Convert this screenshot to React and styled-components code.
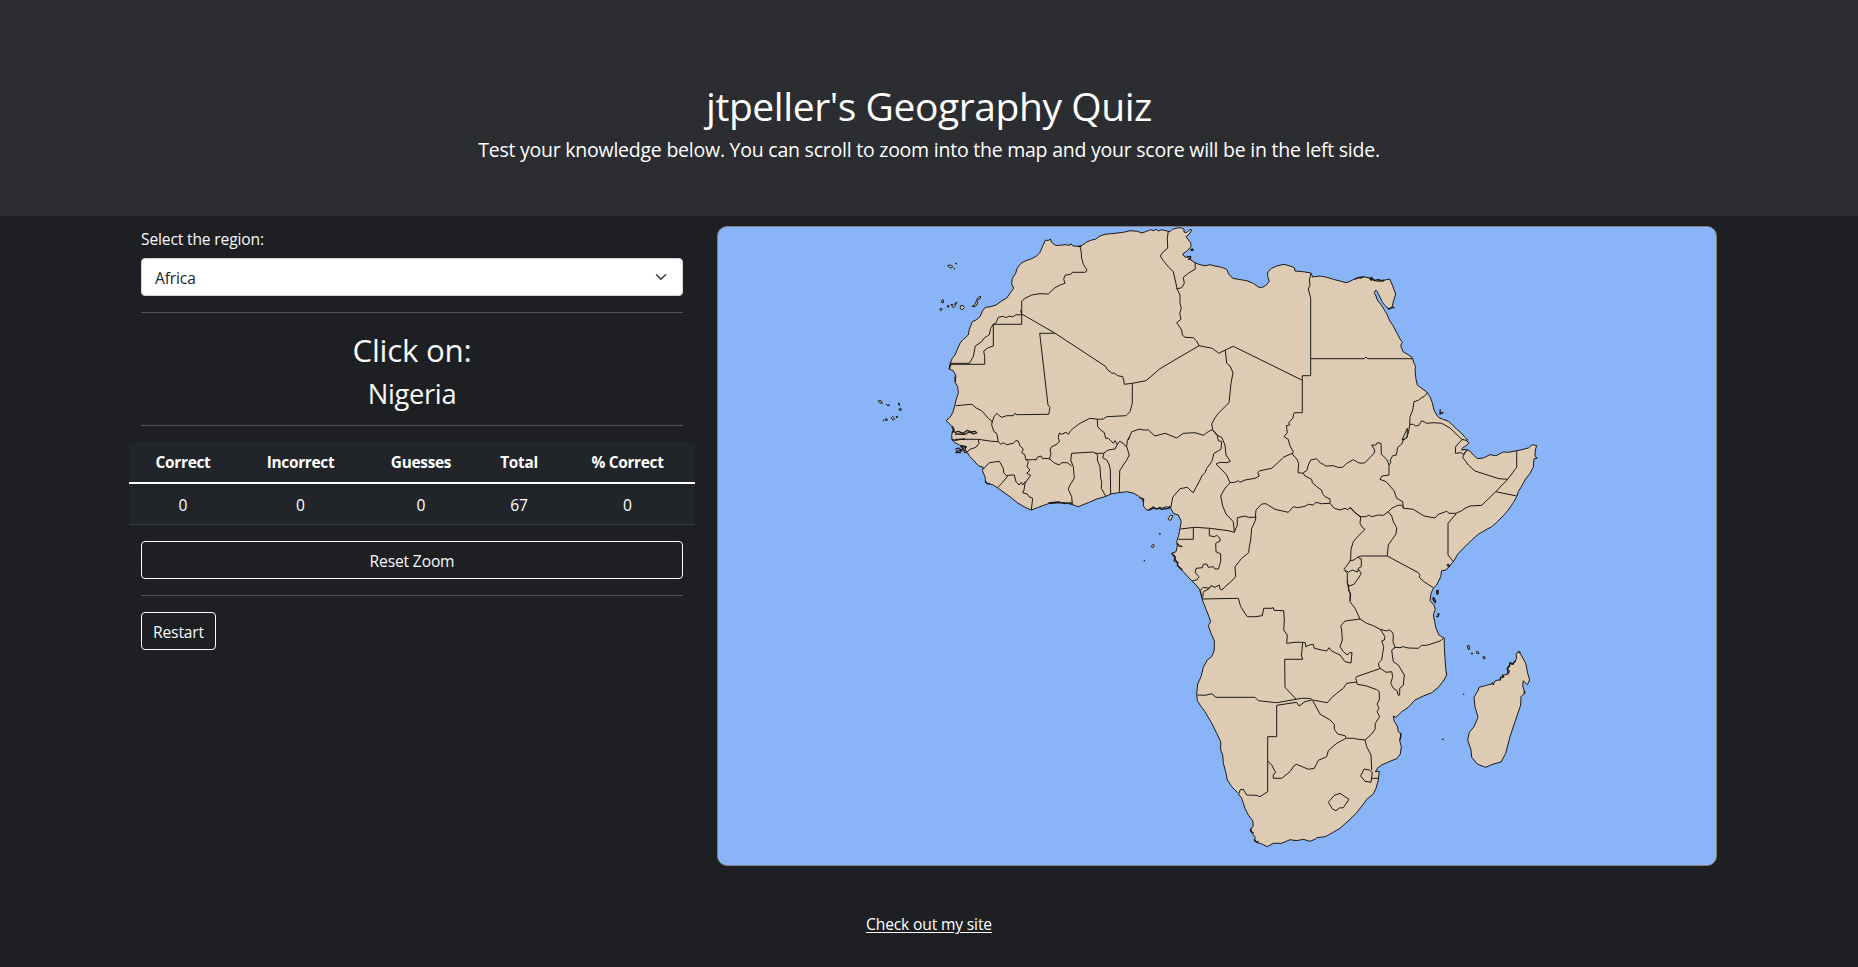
import React from "react";
import styled, { createGlobalStyle } from "styled-components";

const GlobalStyle = createGlobalStyle`
  *, *::before, *::after { box-sizing: border-box; }
  body {
    margin: 0;
    background: #1e1f23;
    color: #f8f9fa;
    font-family: "Segoe UI", "Open Sans", "Noto Sans", sans-serif;
    font-size: 15.6px;
    line-height: 24px;
    letter-spacing: -0.15px;
  }
`;

const Page = styled.div`
  height: 967px;
  overflow: hidden;
  background: #1e1f23;
`;

const Header = styled.header`
  height: 216px;
  padding-top: 82px;
  background: #2b2d31;
  color: #fff;
  text-align: center;
`;

const Title = styled.h1`
  margin: 0 0 5px;
  font-size: 39px;
  font-weight: 400;
  line-height: 48px;
  letter-spacing: -0.43px;
`;

const Lead = styled.p`
  margin: 0;
  font-size: 19.5px;
  font-weight: 400;
  line-height: 30px;
  letter-spacing: -0.235px;
`;

const Main = styled.main`
  width: 1600px;
  margin: 0 auto;
  display: flex;
  align-items: flex-start;
`;

const Sidebar = styled.section`
  width: 566px;
  padding: 11px 12px 0;
  display: flex;
  flex-direction: column;
`;

const Label = styled.label`
  height: 24px;
  margin-bottom: 7px;
`;

const Select = styled.div`
  height: 38px;
  padding: 0 13px;
  display: flex;
  align-items: center;
  justify-content: space-between;
  background: #fff;
  color: #212529;
  border: 1px solid #ced4da;
  border-radius: 4px;
`;

const Selected = styled.span`
  padding-top: 2px;
`;

const Rule = styled.hr`
  width: 100%;
  height: 1px;
  margin: 16px 0;
  border: 0;
  background: #515255;
`;

const Prompt = styled.h2`
  margin: 0 0 8px;
  padding-top: 2px;
  font-size: 31.3px;
  font-weight: 400;
  line-height: 38.4px;
  letter-spacing: -0.26px;
  text-align: center;
`;

const Target = styled.h3`
  margin: 0 0 -2px;
  font-size: 27.3px;
  font-weight: 400;
  line-height: 33.6px;
  letter-spacing: -0.34px;
  text-align: center;
`;

const ScoreTable = styled.table`
  width: 566px;
  margin: 0 -12px 16px;
  table-layout: fixed;
  border-collapse: separate;
  border-spacing: 0;
  background: #212529;
  color: #fff;
  text-align: center;
`;

const Col = styled.col`
  width: ${(p) => p.$w}px;
`;

const HeadCell = styled.th`
  height: 40px;
  padding: 9px 0 7px;
  font-weight: 700;
  font-size: 15.4px;
  line-height: 24px;
  letter-spacing: -0.3px;
`;

const Cell = styled.td`
  height: 43px;
  padding: 9px 0 7px;
  border-top: 2px solid #fff;
  border-bottom: 1px solid #373b3e;
  line-height: 24px;
`;

const Button = styled.button`
  align-self: ${(p) => (p.$block ? "stretch" : "flex-start")};
  width: ${(p) => (p.$block ? "auto" : "75px")};
  height: 38px;
  padding: 2px 0 0;
  border: 1px solid #f8f9fa;
  border-radius: 4px;
  background: transparent;
  color: #f8f9fa;
  font: inherit;
  letter-spacing: inherit;
`;

const MapFrame = styled.section`
  width: 1000px;
  height: 640px;
  margin: 10px 0 0 22px;
  overflow: hidden;
  background: #8ab4f8;
  border: 1px solid #808080;
  border-radius: 10px;
`;

const MapSvg = styled.svg`
  display: block;
  width: 998px;
  height: 638px;
`;

const Land = styled.path`
  fill: #ddcbb3;
  stroke: #1c1a18;
  stroke-width: 1;
  stroke-linejoin: round;
`;

const Border = styled.path`
  fill: none;
  stroke: #1c1a18;
  stroke-width: ${(p) => p.$w || 1};
  stroke-linejoin: round;
`;

const Footer = styled.footer`
  margin-top: 46px;
  text-align: center;
`;

const SiteLink = styled.a`
  color: #fff;
  text-decoration: underline;
  text-underline-offset: 2px;
`;

/* Origins of the map sheets; points are stored in thirds of a pixel. */
const SHEETS = {
  A: [860, 220], B: [1080, 220], C: [1300, 220], D: [930, 400],
  E: [1150, 400], F: [1350, 400], G: [1180, 580], H: [1340, 580],
};

const project = (sheet, points) =>
  points.trim().split(/\s+/).map((pair) => {
    const [x, y] = pair.split(",").map(Number);
    return `${(SHEETS[sheet][0] + x / 3).toFixed(1)} ${(SHEETS[sheet][1] + y / 3).toFixed(1)}`;
  });

const line = (parts, close) =>
  "M" + parts.flatMap(([s, p]) => project(s, p)).join("L") + (close ? "Z" : "");

const COAST = [
  ["A", "267,447 270,432 277,415 285,405 292,388 300,370 308,360 325,345 328,328 337,305 348,300 360,290 368,272 376,262 392,260 408,255 425,243 440,234 450,220 461,205 455,192 457,175 467,160 471,145 483,130 497,122 515,116 530,108 540,97 548,78 556,61 566,61 571,57 574,66 586,76 600,76 615,74 630,76 632,71 640,78 655,79 668,75 680,66 695,60 706,58 720,48"],
  ["B", "75,43 105,40 130,37 150,32 172,34 186,39 200,34 212,29 222,32 228,27 235,33 245,29 262,33 270,35 277,28 295,23 305,24 312,28 312,36 320,38 330,28 335,30 328,42 318,50 324,58 332,68 333,80 322,92 308,102 315,112 330,110 332,120 345,128 360,134 375,137 390,134 405,138 425,142 440,148 446,162 458,175 475,178 500,182 520,190 535,201 545,203 558,196 568,184 563,170 563,156 575,145 590,138 612,133 630,138 643,143 645,153 670,155 693,159 697,168"],
  ["C", "37,171 60,168 80,172 100,178 120,183 138,188 150,184 165,176 180,171 195,171 210,174 222,182 240,184 255,180 269,177 277,195 287,222 280,245 276,262 270,268 258,260 248,248 240,232 232,215 227,210 223,218 228,228 232,240 242,253 252,268 262,285 268,300 280,318 290,338 303,362 308,367 303,372 303,380 310,396 325,404 337,413 342,430 347,440 345,450 348,478 352,495 365,505 380,516 390,530 397,548 402,570 410,585 418,594 430,598 445,604 455,612 470,628 480,635 495,652 503,660"],
  ["F", "348,121 357,128 350,136 338,143 335,150 350,148 362,155 370,165 383,176 400,174 420,164 438,167 460,156 475,157 500,152 515,149 535,144 547,134 560,137 556,150 555,168 562,174 552,176 550,202 540,220 525,240 513,262 505,275 500,290 490,308 475,330 460,347 440,367 425,380 405,391 385,403 365,420 345,440 325,460 310,485 295,502 288,510 275,512 272,530 260,555 250,565 243,580 240,602 252,615 256,628 250,645 254,665"],
  ["H", "288,145 297,165 313,175 313,200 315,235 317,265 320,285 310,303 295,322 275,338 250,348 225,360 205,382 185,395 168,412 160,408 163,425 172,438 175,455 182,462 182,472 179,482 184,500 181,522 170,536 145,546 125,555 112,565 106,575 118,574 115,600 108,625 100,642 80,658 68,675 50,698 30,718 0,745"],
  ["G", "460,757 435,770 410,773 405,778 390,784 370,778 350,782 330,779 305,790 280,790 262,800 248,793 232,788 223,783 226,772 216,760 210,750 220,738 218,722 205,705 195,685 185,655 172,637 155,620 142,600 137,575 130,550 128,525 122,510 122,485 110,460 95,430 75,395 60,375 52,362 50,340 53,312 63,290 70,262 82,240 95,230 103,210 103,182 93,160 85,137 92,125 85,105 75,80 67,60"],
  ["E", "157,598 150,570 138,555 120,537 100,515 85,500 78,480 65,460 78,455 82,438 80,425 87,402 90,385 94,365 85,345 70,340 62,325 50,320 30,326 10,325 0,330"],
  ["D", "650,330 640,318 641,303 628,290 612,280 590,275 545,281 525,290 500,297 475,308 445,320 428,314 405,308 380,309 355,311 330,320 304,330 285,322 262,308 240,290 225,280 205,265 190,255 167,249 165,230 157,212 160,202 145,197 130,180 120,170 112,158 103,158 100,145 110,140 88,135 75,128 66,120 65,105 70,90 65,80 58,70 48,62 60,52 68,38 74,18 78,0"],
  ["A", "295,520 293,500 284,485 288,468 280,452 267,447"],
];

const MADAGASCAR = [["H", "537,215 545,228 557,250 563,280 569,300 562,314 550,302 548,318 555,338 543,350 542,375 525,425 510,470 497,520 483,546 460,552 437,562 412,552 395,532 393,510 383,480 388,457 402,440 414,412 405,380 402,352 415,330 417,322 440,316 462,310 466,302 480,299 488,286 503,283 503,262 513,247 518,255 530,235 528,222"]];

const BORDERS = [
  [["A", "660,79 663,92 665,115 670,133 681,150 676,157 637,157 632,163 615,166 611,178 615,190 600,195 585,203 565,222 540,221 515,225 495,235 485,243 485,313 400,313 400,378 385,383 371,393 374,410 374,433 270,433"]],
  [["A", "270,430 328,430 340,410 346,378 365,365 372,355 388,344 392,325 400,313 408,308 415,292 430,289 438,293 447,288 458,291 468,284 485,285 482,270"]],
  [["A", "485,282 584,339"], ["B", "60,428 78,440 80,447 95,459 104,460 113,467 128,470 131,480 133,493 157,490 198,482 240,446 357,377"]],
  [["A", "584,340 539,340 564,555 570,562 566,583 470,584 465,580 460,587 440,587 425,592 418,587 411,580 402,590 397,605 385,595 365,572 350,565 335,553 287,557"]],
  [["B", "265,33 262,55 263,85 250,95 241,108 250,122 265,140 280,155 292,208 300,225 300,250 304,265 299,280 303,298 290,308 305,330 307,345 315,352 340,353 350,363 357,377 397,385 416,400 436,390 460,379 665,480"]],
  [["B", "345,128 346,147 325,160 310,172 313,190 305,203 289,207"]],
  [["B", "436,390 440,430 450,438 459,458 453,490 447,548 415,580 403,597 395,612 398,628"]],
  [["B", "157,490 157,550 150,575 138,587 80,590 70,597 55,598 30,595 0,610"], ["D", "430,85 422,92 415,103 408,97 395,103 388,99 385,112 388,125 378,134 365,140 360,150 363,162 358,177"]],
  [["B", "145,660 155,635 180,627 190,630 205,630 225,648 255,640 290,654 310,640 345,638 370,646 385,635 398,628"]],
  [["B", "693,160 688,180 690,195 685,207 692,235 692,467 667,467 667,578 643,578"], ["E", "432,40 428,55 416,68 419,75 409,77 411,90 412,98 402,110 415,118 420,138 430,155 427,162 440,177 446,190 444,218 460,220 465,228 485,238 487,248 500,260 515,270 517,280 525,290 540,297 540,310 553,325 570,330 585,325 592,329 602,323 615,338 632,350"]],
  [["C", "33,416 193,416 198,411 203,416 338,416"]],
  [["C", "383,518 372,530 365,533 355,541 342,545 338,570 330,590 329,615 325,640 318,655 306,660"], ["F", "172,85 172,112 160,120 155,132 143,142 139,165 128,167 121,180 122,188 117,195 117,225 96,228 90,238 108,245 120,258 132,272 140,295 158,305 160,325 190,328 222,348 255,354 265,343 290,334 297,340 318,340 335,332 345,325 360,318 395,316 437,275 473,238 500,202 500,152"]],
  [["F", "180,73 190,73 197,78 207,76 215,62 230,70 250,68 275,70 300,84 335,118 348,121"]],
  [["F", "473,238 447,236 375,213 355,195 338,172 343,162 350,150"]],
  [["F", "338,118 330,125 317,140 316,160 333,158 340,163 352,150"]],
  [["F", "437,275 500,288"]],
  [["F", "318,342 294,370 294,465 310,485"]],
  [["F", "0,322 15,338 30,350 50,350 55,345 65,350 85,345 100,346 115,335 125,325 143,316 155,316 162,325"]],
  [["F", "115,335 125,348 130,365 140,383 138,402 127,418 115,435 112,468"]],
  [["E", "625,470 634,468"], ["F", "112,468 205,518 210,526 208,532 222,545 250,563"]],
  [["E", "460,218 470,212 475,195 482,180 500,176 512,190 520,193 527,198 550,197 562,202 578,202 590,190 610,179 625,188 635,190"], ["F", "45,188 72,160 74,150 65,135 78,135 82,128 93,130 94,163 110,178 117,195"]],
  [["E", "427,160 400,172 385,187 365,205 330,212 323,218 328,228 315,235 285,240 270,247 265,242 255,247 240,248"]],
  [["E", "240,248 230,225 212,206 198,192 210,187 231,188 241,184 228,165 225,135 215,112 200,105 188,90"]],
  [["E", "188,90 202,105 205,122 215,125 213,148 192,160 185,185 170,205 165,218 155,228 150,240 138,262 130,278 120,270 112,262 90,266 68,292 62,325"]],
  [["E", "240,248 225,265 212,288 218,318 228,342 250,365 253,397 235,392 180,385 135,382 91,387"]],
  [["E", "130,384 130,418 85,418"]],
  [["E", "253,397 262,375 262,353 285,348 295,352 316,352 318,330 335,312 348,311 375,328 415,337 430,320 443,323 465,319 475,313 490,315 497,307 515,311 540,310"]],
  [["E", "318,348 316,362 305,385 302,420 298,440 296,458 275,475 255,500 257,530 245,543 225,560 216,570 210,567 208,555 195,562 183,557 178,565 160,562 150,572 152,580 158,598"]],
  [["E", "178,387 178,407 193,410 200,406 210,415 210,423 197,430 198,455 212,462 212,485 205,507 195,507 190,500 175,502 170,492 160,493 157,503 138,505 136,518 147,530 140,540 127,542"]],
  [["E", "159,590 160,575 175,568 178,562"]],
  [["G", "67,57 175,55 182,80 202,110 225,110 247,107 251,85 273,85 280,83 282,91 311,92 313,120 311,150 322,165 320,190 345,187 368,187 376,188 377,200 388,195 400,193 403,205 425,210 440,213 447,203 455,213 480,225 495,245 513,249 516,218 508,218 502,225 490,215 480,200 487,180 485,150 482,138 495,123 540,117"]],
  [["G", "502,0 503,15 510,40 510,65 525,85 540,117 560,130"], ["H", "100,137 120,148 140,153 147,149 157,157 160,165 159,185 165,202"]],
  [["E", "632,350 630,370 637,382 645,388 625,408 610,425 603,448 602,478 598,487 582,508 592,520 592,550 597,558 595,570 602,582 600,602"]],
  [["E", "600,482 612,480 622,472 634,477 634,500 625,505 623,516 607,510 595,517 585,510"]],
  [["E", "625,507 634,520 626,533 612,553 597,558"]],
  [["H", "122,150 135,170 133,180 125,183 131,200 128,220 125,240 115,250 118,262 125,268 138,277 155,275 158,290 152,310 160,325 171,332 175,346 179,345 179,325 190,316 193,285 175,255 160,245 157,225 155,210 165,203"]],
  [["H", "162,202 180,203 190,200 205,204 235,205 245,196 260,196 285,188 300,183 311,175"]],
  [["H", "122,265 50,290 47,295 52,313 80,318 110,329 118,335 118,360 111,372 117,385 111,395 119,410 106,430 105,448 95,462 75,480 80,500 93,525 95,570"]],
  [["G", "530,306 500,310 490,325 470,340 455,353 442,368 425,365 398,360 390,355 365,355 290,368 235,362 225,352 108,352 95,341 75,346 52,345"]],
  [["G", "368,187 366,210 364,225 368,238 314,238 315,322 348,357"]],
  [["G", "395,360 375,365 357,378 350,367 290,376 290,470 263,470 263,635 240,650 228,646 200,645 190,628 180,630 178,640"]],
  [["G", "398,362 420,402 450,420 463,433 463,448 473,462 495,467 500,475 520,475 535,478 555,480"]],
  [["G", "498,475 470,490 445,512 440,530 415,541 403,565 385,568 350,553 342,557 330,575 305,595 280,595 280,583 287,578 275,555 263,543"]],
  [["G", "445,667 462,647 480,640 507,658 490,683 478,684 468,692 458,688 445,667"]],
  [["G", "552,567 568,570 577,577 573,607 555,604 542,588 552,567"]],
  [["G", "573,595 595,595"]],
  [["D", "187,62 185,75 192,95 200,100 205,125 185,124 145,118 75,118"]],
  [["D", "205,125 212,133 220,128 230,134 250,130 257,122 265,123 270,138 280,147 275,158 285,165 287,178 300,180 308,178 318,180 322,172 333,168 338,177 345,175 360,177 370,187 387,195 395,188 412,188 425,198"]],
  [["D", "145,118 147,130 138,142 120,148 112,155"]],
  [["D", "160,207 178,188 208,184 220,205 221,218 232,230 215,250 203,263"]],
  [["D", "230,227 243,225 253,225 258,245 267,255 274,247 278,255 285,245"]],
  [["D", "287,178 295,185 291,200 300,210 290,220 302,226 292,240 285,250 282,270 278,278 292,282 297,290 308,295 304,330"]],
  [["D", "425,160 422,180 430,200 433,235 420,255 415,268 425,290 427,312"]],
  [["D", "425,160 490,156 497,160 520,160 535,150 555,147 562,133 555,122 550,130 535,115 527,115 523,98 512,90 503,80 502,58"]],
  [["D", "492,157 503,165 502,180 510,200 512,235 515,245 514,265 528,290"]],
  [["D", "522,160 518,173 530,180 538,195 541,210 542,283"]],
  [["D", "568,278 569,212 580,195 590,180 598,165 590,140 592,122 597,112"]],
  [["D", "560,135 569,124 580,130 588,140"]],
];

const COAST_DETAIL = [
  ["D", "67,93 75,97 85,94 100,100 112,91 125,96 135,94 140,99 130,102 118,96 105,103 75,102"],
  ["D", "66,118 75,121 90,118 105,117"],
  ["D", "76,148 85,144 96,152 80,153 78,158 90,158 98,145 92,139 108,140 104,152 115,156"],
  ["D", "165,244 174,252 180,250"],
  ["D", "355,309 385,306 405,311 422,308 428,314"],
  ["D", "628,292 641,297 638,305"],
  ["D", "655,331 670,321 680,328 690,322 694,328 715,325 720,318"],
  ["E", "65,460 76,470 72,482 84,487 82,496 97,510"],
  ["E", "82,430 88,438 97,440"],
  ["C", "164,178 175,173 183,174 192,169"],
  ["C", "208,174 214,181 214,172 222,181 235,179 249,183 252,179"],
  ["C", "421,568 420,582 429,578 418,580"],
  ["C", "263,268 276,262 284,263"],
  ["F", "291,498 294,493 299,498 294,502"],
  ["F", "260,582 260,572 265,571 264,582 260,582"],
  ["F", "250,591 249,599 256,608 257,603 250,591"],
  ["F", "258,648 264,650 267,642 262,642"],
  ["H", "182,458 182,470 179,480"],
  ["G", "214,745 213,754 221,760"],
  ["G", "222,778 230,787 236,784"],
  ["H", "503,282 508,274 501,267 509,258 509,248 516,253 527,243"],
  ["H", "462,314 455,308"],
  ["H", "480,302 482,292 491,291 487,284"],
  ["H", "534,214 542,219"],
  ["H", "552,333 554,342"],
  ["A", "268,448 271,436 274,434"],
  ["A", "284,470 287,485"],
  ["A", "277,618 283,630 275,638"],
  ["B", "331,89 337,87 340,90 332,92"],
  ["B", "322,111 332,109 331,118 324,117"],
  ["A", "655,79 664,80"],
];

const ISLANDS = [
  ["A", "263,137 270,135 278,139 275,144 268,142"], ["A", "287,129 290,131 287,132"], ["A", "282,145 285,146 283,147"],
  ["A", "246,239 251,241 250,248 245,248"], ["A", "239,267 245,265 246,269 242,272"], ["A", "262,257 267,257 266,262 262,261"],
  ["A", "273,253 280,255 291,246 284,260 280,263"], ["A", "301,258 309,256 313,263 307,269 301,266"],
  ["A", "336,259 343,256 350,241 353,246 350,256 342,260"], ["A", "350,238 356,231 362,229 360,236 353,239"],
  ["A", "54,543 61,540 67,550 60,549"], ["A", "78,552 82,556 89,555 83,557"], ["A", "115,549 119,551 118,557"],
  ["A", "117,567 122,564 124,571 118,571"], ["A", "94,593 98,589 104,597 98,600"], ["A", "108,590 113,589 111,594"],
  ["A", "77,596 82,597 81,602 77,601"], ["A", "69,600 73,601 70,602"],
  ["E", "55,356 61,346 69,347 62,361 55,359"], ["E", "27,401 31,400 31,403"], ["E", "4,440 9,433 13,436 9,443"],
  ["D", "642,481 645,482 643,483"],
  ["H", "382,198 387,196 389,208 384,208"], ["H", "393,220 398,220 396,223"], ["H", "408,217 413,214 417,221 412,220"],
  ["H", "429,230 433,229 436,235 431,237"], ["H", "369,343 371,342 372,344"], ["H", "306,477 310,478 309,480"],
];

const SCORES = [
  { label: "Correct", value: 0, width: 108 },
  { label: "Incorrect", value: 0, width: 127 },
  { label: "Guesses", value: 0, width: 114 },
  { label: "Total", value: 67, width: 82 },
  { label: "% Correct", value: 0, width: 135 },
];

const AfricaMap = () => (
  <MapSvg viewBox="718 227 998 638" role="img" aria-label="Africa">
    <Land d={line(COAST, true)} />
    <Land d={line(MADAGASCAR, true)} />
    {ISLANDS.map((part, i) => <Land key={i} d={line([part], true)} />)}
    {BORDERS.map((parts, i) => <Border key={i} d={line(parts)} />)}
    {COAST_DETAIL.map((part, i) => <Border key={i} $w={1.3} d={line([part])} />)}
  </MapSvg>
);

const Chevron = () => (
  <svg width="16" height="12" viewBox="0 0 16 16">
    <path d="M2 5l6 6 6-6" fill="none" stroke="#343a40" strokeWidth="2" strokeLinecap="round" strokeLinejoin="round" />
  </svg>
);

export default function App() {
  return (
    <Page>
      <GlobalStyle />
      <Header>
        <Title>jtpeller's Geography Quiz</Title>
        <Lead>Test your knowledge below. You can scroll to zoom into the map and your score will be in the left side.</Lead>
      </Header>
      <Main>
        <Sidebar>
          <Label>Select the region:</Label>
          <Select><Selected>Africa</Selected><Chevron /></Select>
          <Rule />
          <Prompt>Click on:</Prompt>
          <Target>Nigeria</Target>
          <Rule />
          <ScoreTable>
            <colgroup>{SCORES.map((s) => <Col key={s.label} $w={s.width} />)}</colgroup>
            <thead><tr>{SCORES.map((s) => <HeadCell key={s.label}>{s.label}</HeadCell>)}</tr></thead>
            <tbody><tr>{SCORES.map((s) => <Cell key={s.label}>{s.value}</Cell>)}</tr></tbody>
          </ScoreTable>
          <Button $block>Reset Zoom</Button>
          <Rule />
          <Button>Restart</Button>
        </Sidebar>
        <MapFrame><AfricaMap /></MapFrame>
      </Main>
      <Footer><SiteLink href="#">Check out my site</SiteLink></Footer>
    </Page>
  );
}
